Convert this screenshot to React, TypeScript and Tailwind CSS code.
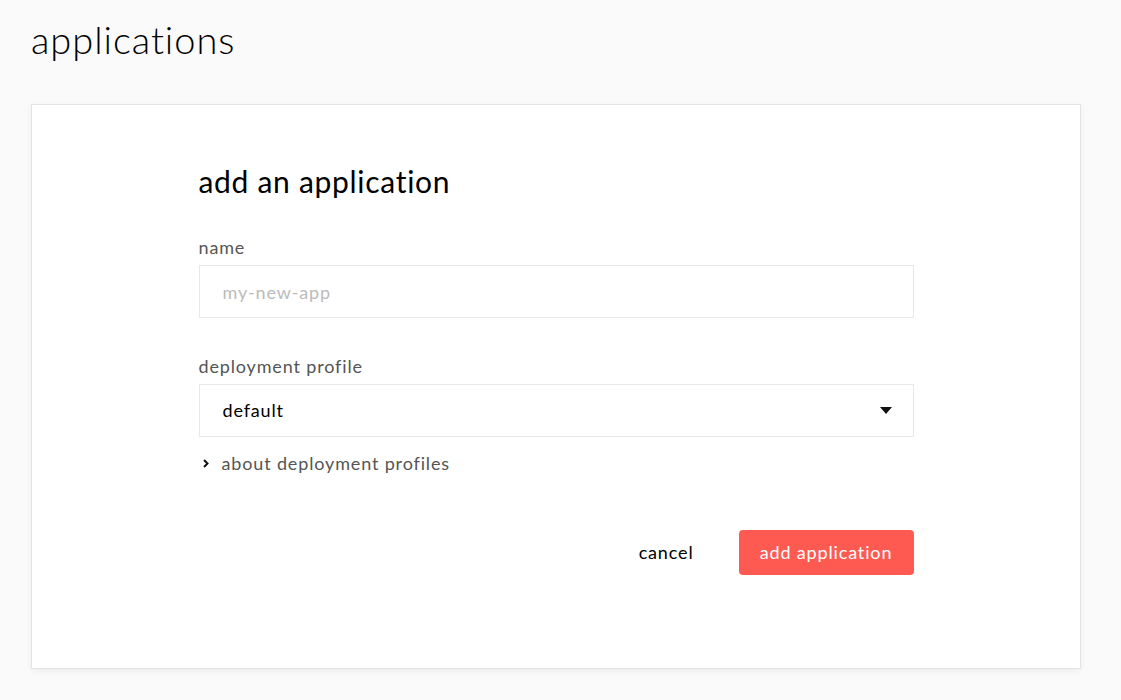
import React from "react"

const AddApplication: React.FC = () => {
    return (
        <div className="min-h-[700px] bg-[#fafafa] px-[31px] pt-[13px] pb-[30px] text-black" style={{ fontFamily: "Lato, 'Noto Sans', sans-serif" }}>
            <h1 className="text-[38px] leading-[52px] font-light tracking-[0.95px]">applications</h1>
            <div className="mt-[39px] w-[1050px] h-[565px] bg-white border border-[#e4e4e4] shadow-[0_2px_6px_rgba(0,0,0,0.06)]">
                <div className="mx-auto w-[715px] pt-[56px]">
                    <h2 className="text-[30px] leading-[40px] font-normal tracking-[0.7px]">add an application</h2>

                    <label className="block mt-[35px] text-[18px] leading-[22px] tracking-[0.85px] text-[#555]">name</label>
                    <input
                        placeholder="my-new-app"
                        className="mt-[7px] block w-full h-[53px] border border-[#e8e8e8] px-[23px] text-[18px] tracking-[0.85px] outline-none placeholder:text-[#bbb]"
                    />

                    <label className="block mt-[37px] text-[18px] leading-[22px] tracking-[0.85px] text-[#555]">deployment profile</label>
                    <div className="mt-[7px] flex items-center justify-between h-[53px] border border-[#e8e8e8] px-[23px] text-[18px] tracking-[0.85px]">
                        <span>default</span>
                        <svg width="12" height="7" viewBox="0 0 12 7" className="mr-[-2px]">
                            <path d="M0 0 H12 L6 7 Z" fill="#111" />
                        </svg>
                    </div>

                    <button className="mt-[15px] flex items-center text-[18px] leading-[22px] tracking-[0.85px] text-[#555]">
                        <svg width="6" height="9" viewBox="0 0 6 9" className="ml-[4px] mr-[13px]">
                            <path d="M1 1 L4.5 4.5 L1 8" stroke="#111" strokeWidth="2" fill="none" />
                        </svg>
                        about deployment profiles
                    </button>

                    <div className="mt-[56px] flex justify-end items-center">
                        <button className="text-[18px] tracking-[0.85px] text-black mr-[45px]">cancel</button>
                        <button className="h-[45px] w-[175px] rounded-[4px] bg-[#ff5a52] text-white text-[18px] tracking-[0.85px]">add application</button>
                    </div>
                </div>
            </div>
        </div>
    )
}

export default function App() {
    return <AddApplication />
}
